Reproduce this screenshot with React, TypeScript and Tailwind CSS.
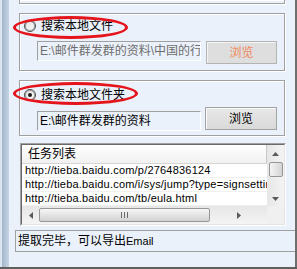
import React from 'react';

const cjk = "font-['Liberation_Sans','Noto_Sans_CJK_SC',sans-serif]";
const etched = 'border border-[#a0a0a0] shadow-[inset_1px_1px_0_#fff,1px_1px_0_#fff]';

const Radio: React.FC<{ checked?: boolean }> = ({ checked }) => (
  <div className="w-[12px] h-[12px] rounded-full border border-[#4f4f4f] bg-gradient-to-br from-[#e2e2e2] to-[#fafafa] shadow-[inset_0_0_0_1px_#9c9c9c] flex items-center justify-center shrink-0">
    {checked && <div className="w-[4px] h-[4px] rounded-full bg-[#1c1c1c]" />}
  </div>
);

const Arrow: React.FC<{ dir: 'up' | 'down' | 'left' | 'right' }> = ({ dir }) => {
  const pts = {
    up: '0,4 7,4 3.5,0',
    down: '0,0 7,0 3.5,4',
    left: '4,0 4,7 0,3.5',
    right: '0,0 0,7 4,3.5',
  }[dir];
  const vertical = dir === 'up' || dir === 'down';
  return (
    <svg width={vertical ? 7 : 4} height={vertical ? 4 : 7} viewBox={vertical ? '0 0 7 4' : '0 0 4 7'}>
      <polygon points={pts} fill="#5a5a5a" />
    </svg>
  );
};

const rows = [
  'http://tieba.baidu.com/p/2764836124',
  'http://tieba.baidu.com/i/sys/jump?type=signsetting',
  'http://tieba.baidu.com/tb/eula.html',
];

export default function App() {
  return (
    <div className={`w-[297px] h-[269px] bg-[#ebf1fa] flex flex-col overflow-hidden relative ${cjk}`}>
      <div className="flex h-[267px]">
        {/* window frame */}
        <div className="w-[9px] shrink-0 flex">
          <div className="w-[2px] bg-[#dce6f1]" />
          <div className="flex-1 bg-gradient-to-r from-[#a4b6cb] to-[#c6d4e5]" />
        </div>

        <div className="flex-1 flex flex-col">
          {/* previous group (cut) */}
          <div className={`ml-[10px] w-[266px] h-[4px] border-t-0 ${etched}`} />

          {/* group: file */}
          <div className={`ml-[10px] mt-[9px] w-[266px] h-[58px] ${etched}`}>
            <div className="mt-[5px] pl-[4px] h-[14px] flex items-center gap-[5px]">
              <Radio />
              <span className="text-[12px] leading-[14px] text-black">搜索本地文件</span>
            </div>
            <div className="mt-[8px] pl-[17px] flex items-start">
              <div className="w-[164px] h-[20px] border border-t-[#a0a0a0] border-l-[#a0a0a0] border-r-white border-b-white overflow-hidden whitespace-nowrap pl-[2px] text-[12px] leading-[18px] text-[#6d6d6d]">
                E:\邮件群发群的资料\中国的行
              </div>
              <div className="ml-[5px] w-[71px] h-[23px] border border-[#b4b4b4] bg-[#dedede] shadow-[inset_1px_1px_0_#f4f4f4] flex items-center justify-center text-[12px] text-[#f0885a]">
                浏览
              </div>
            </div>
          </div>

          {/* group: folder */}
          <div className={`ml-[10px] mt-[9px] w-[266px] h-[56px] ${etched}`}>
            <div className="mt-[7px] pl-[4px] h-[14px] flex items-center gap-[5px]">
              <Radio checked />
              <span className="text-[12px] leading-[14px] text-black">搜索本地文件夹</span>
            </div>
            <div className="mt-[5px] pl-[17px] flex items-start">
              <div className="mt-[4px] w-[164px] h-[20px] border border-t-[#a0a0a0] border-l-[#a0a0a0] border-r-white border-b-white overflow-hidden whitespace-nowrap pl-[2px] text-[12px] leading-[18px] text-black">
                E:\邮件群发群的资料
              </div>
              <div className="ml-[4px] w-[72px] h-[23px] border border-[#a3a3a3] bg-gradient-to-b from-[#e8e8e8] to-[#d9d9d9] shadow-[inset_1px_1px_0_#f8f8f8] flex items-center justify-center text-[12px] text-black">
                浏览
              </div>
            </div>
          </div>

          {/* task list */}
          <div className="ml-[11px] mt-[7px] w-[266px] h-[83px] border border-t-[#a0a0a0] border-l-[#a0a0a0] border-r-white border-b-white">
            <div className="h-full border border-t-[#6a6a6a] border-l-[#6a6a6a] border-r-[#e3e3e3] border-b-[#e3e3e3] bg-white flex flex-col">
              <div className="flex h-[61px]">
                <div className="w-[245px] flex flex-col overflow-hidden">
                  <div className="h-[19px] shrink-0 border-b border-[#d5d5d5] border-r border-r-[#c8c8c8] bg-gradient-to-b from-white to-[#f1f1f1] pl-[6px] text-[12px] leading-[18px] text-black">
                    任务列表
                  </div>
                  {rows.map((r) => (
                    <div
                      key={r}
                      className="h-[14px] shrink-0 border-b border-[#f0f0f0] pl-[3px] whitespace-nowrap font-['Liberation_Sans',sans-serif] text-[11px] tracking-[0.2px] leading-[13px] text-black"
                    >
                      {r}
                    </div>
                  ))}
                </div>
                {/* vertical scrollbar */}
                <div className="flex-1 bg-gradient-to-r from-[#e6e6e6] to-[#f4f4f4] flex flex-col items-center">
                  <div className="h-[17px] flex items-center justify-center">
                    <Arrow dir="up" />
                  </div>
                  <div className="w-[14px] h-[15px] rounded-[2px] border border-[#979797] bg-gradient-to-r from-[#f4f4f4] to-[#d4d4d4]" />
                  <div className="flex-1" />
                  <div className="h-[15px] flex items-center justify-center">
                    <Arrow dir="down" />
                  </div>
                </div>
              </div>
              {/* horizontal scrollbar */}
              <div className="flex flex-1">
                <div className="w-[245px] bg-gradient-to-b from-[#e6e6e6] to-[#f4f4f4] flex items-center">
                  <div className="w-[17px] flex justify-center">
                    <Arrow dir="left" />
                  </div>
                  <div className="w-[171px] h-[14px] rounded-[2px] border border-[#979797] bg-gradient-to-b from-[#f6f6f6] to-[#d2d2d2] flex items-center justify-center gap-[2px]">
                    <div className="w-[1px] h-[6px] bg-[#6b6b6b]" />
                    <div className="w-[1px] h-[6px] bg-[#6b6b6b]" />
                    <div className="w-[1px] h-[6px] bg-[#6b6b6b]" />
                  </div>
                  <div className="flex-1 flex justify-center">
                    <Arrow dir="right" />
                  </div>
                </div>
                <div className="flex-1 bg-[#f0f0f0]" />
              </div>
            </div>
          </div>

          {/* status */}
          <div className="ml-[6px] mt-[4px] h-[22px] border border-[#a0a0a0] border-r-0 pl-[2px] flex items-center whitespace-nowrap text-black">
            <span className="text-[12px] leading-[14px]">提取完毕，可以导出</span>
            <span className="font-['Liberation_Sans',sans-serif] text-[11px] leading-[14px]">Email</span>
          </div>
        </div>

        <div className="w-[2px] shrink-0 bg-[#6e6e6e]" />
      </div>
      <div className="h-[2px] bg-[#5f5f5f]" />

      {/* red annotation ellipses */}
      <div className="absolute left-[13px] top-[16px] w-[115px] h-[23px] rounded-[50%] border-[3px] border-[#e5131b]" />
      <div className="absolute left-[13px] top-[82px] w-[125px] h-[23px] rounded-[50%] border-[3px] border-[#e5131b]" />
    </div>
  );
}
